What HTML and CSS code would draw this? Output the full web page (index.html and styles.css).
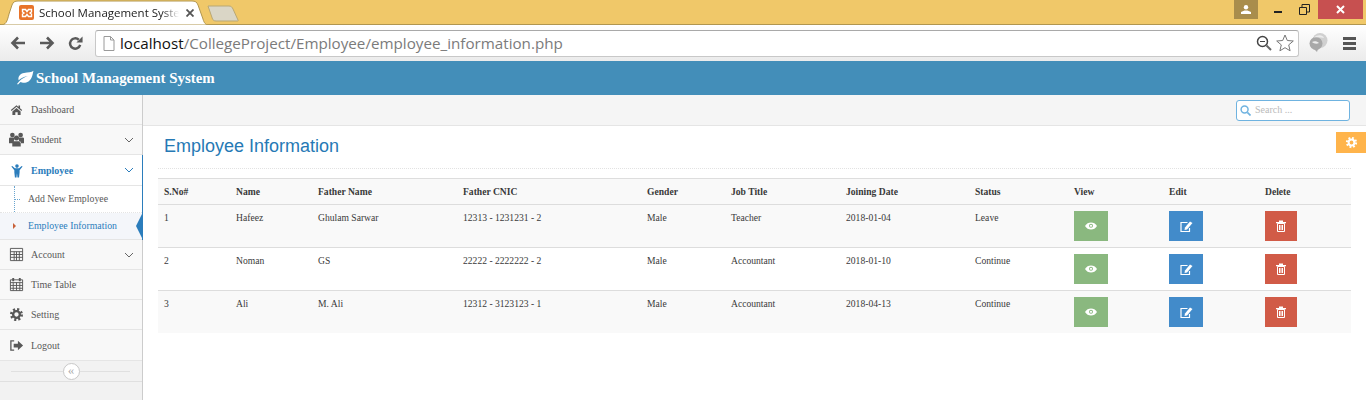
FILE: index.html
```html
<!DOCTYPE html>
<html lang="en">
<head>
    <meta charset="UTF-8">
    <title>School Management System</title>
    <link rel="stylesheet" href="styles.css">
</head>
<body>
    <svg class="icon-defs" width="0" height="0">
        <symbol id="i-home" viewBox="-1.500 -2 19 19"><path d="M8 2 0.8 8.200l1 1.100L8 4l6.200 5.300 1-1.100L12.500 6V2.500h-2v1.800zM2.800 10v4.500h3.700V11h3v3.500h3.700V10L8 5.600z"/></symbol>
        <symbol id="i-users" viewBox="0 0 16 16"><circle cx="3.600" cy="3.200" r="2.500"/><circle cx="12.400" cy="3.200" r="2.500"/><circle cx="8" cy="6.300" r="2.700"/><path d="M0 7q0-1.200 1.500-1.200h4.200L5.200 9.500 3.800 12H0zM16 7q0-1.200-1.500-1.200h-4.200l.5 3.700 1.400 2.500H16zM5 9.800h6q1.500 0 1.500 1.500V15.500h-9V11.300q0-1.500 1.500-1.500z"/></symbol>
        <symbol id="i-person" viewBox="0 0 16 16"><circle cx="8.500" cy="3.300" r="1.900"/><path d="M2.500 3.800 3.500 3.300 6.300 5.500H10.700L13.500 3.300 14.500 3.800 11.300 7.800V10.200L10.700 15.500H9L8.500 11 8 15.500H6.300L5.700 10.200V7.800z"/></symbol>
        <symbol id="i-table" viewBox="0 0 16 16"><path d="M1.500 1.500h13v13h-13zM1.500 5h13M1.500 8h13M1.500 11h13M5.500 5v9.500M8 5v9.500M11 5v9.500" fill="none" stroke="currentColor"/></symbol>
        <symbol id="i-calendar" viewBox="0 0 16 16"><path d="M1.500 3h13v11.500h-13zM1.500 6h13M1.500 9h13M1.500 12h13M4.500 6v8.500M8 6v8.500M11.500 6v8.500" fill="none" stroke="currentColor"/><path d="M3.500 1h2v3.500h-2zM10.500 1h2v3.500h-2z"/></symbol>
        <symbol id="i-cog" viewBox="-1 -1 18 18"><circle cx="8" cy="8" r="6" fill="none" stroke="currentColor" stroke-width="3.600" stroke-dasharray="2.400 2.310"/><circle cx="8" cy="8" r="4" fill="none" stroke="currentColor" stroke-width="2.800"/></symbol>
        <symbol id="i-logout" viewBox="0 0 16 16"><path d="M5.500 3H2v10h3.500" fill="none" stroke="currentColor" stroke-width="1.400"/><path d="M5 6h4.500V3L15 8l-5.500 5v-3H5z"/></symbol>
        <symbol id="i-leaf" viewBox="0 0 18 16"><path d="M17.500.8C16.700 3 16.500 9 12.500 11.500 9.500 13.300 6 12.700 4.500 12L2 14.500 1 14l2.500-3C6 8.500 9 7 12 6 8.500 6.300 5 8 2.700 10.300 1.500 6.500 4.500 3.500 8 3c4-.6 7.500-.5 9.500-2.200z"/></symbol>
        <symbol id="i-eye" viewBox="0 0 12 8"><path d="M0 4C1.500 1.500 3.500.5 6 .5s4.500 1 6 3.500C10.500 6.500 8.500 7.500 6 7.500S1.500 6.500 0 4z"/><circle cx="6" cy="3.800" r="2" fill="#8ab87f"/><circle cx="6" cy="3.800" r="1.100"/></symbol>
        <symbol id="i-edit" viewBox="0 0 13 11"><path d="M7.500 1.500H1v9h8.500V7" fill="none" stroke="currentColor" stroke-width="1.200"/><path d="M10 .5l2.500 1.500L7 8.500 4.500 9l.5-2.500z"/></symbol>
        <symbol id="i-trash" viewBox="0 0 10 12"><path d="M1.500 3.500h7v8h-7zM3.500 5v5M5 5v5M6.500 5v5" fill="none" stroke="currentColor"/><path d="M0 2h10v1.200H0zM3 .5h4V2H3z"/></symbol>
    </svg>

    <div class="chrome">
        <div class="tab-strip">
            <div class="tab">
                <svg class="tab-shape" viewBox="0 0 208 25" preserveAspectRatio="none"><path d="M0 25C6 25 7 22 9 14L12 5C13 2 15 1 18 1H192C195 1 197 2 198 5L203 19C204 23 206 25 208 25z" fill="#fff" stroke="#b1964f"/></svg>
                <span class="favicon"><svg viewBox="0 0 12 12" width="12" height="12"><path d="M1.500 2.500h3l1.500 2 1.500-2h3v2.500L9 6l1.500 1v2.500h-3L6 7.500l-1.500 2h-3V7L3 6 1.500 5z" fill="none" stroke="#fff" stroke-width="1.400"/></svg></span>
                <span class="tab-title">School Management Syste</span>
                <svg class="tab-close" viewBox="0 0 8 8" width="8" height="8"><path d="M.5.500l7 7M7.500.500l-7 7" stroke="#555" stroke-width="1.800"/></svg>
            </div>
            <svg class="new-tab" viewBox="0 0 32 17" width="32" height="17"><path d="M1 1H22C24 1 25 2 26 4L31 15C31.500 16 31 16 30 16H9C7 16 6 15 5.500 14z" fill="#dad6c6" stroke="#b9a874"/></svg>
            <div class="win-controls">
                <span class="win-user"><svg viewBox="0 0 10 9" width="10" height="9"><circle cx="5" cy="2.300" r="2.200" fill="#fff"/><path d="M0 9V7l3.500-1.500h3L10 7v2z" fill="#fff"/></svg></span>
                <span class="win-btn"><i class="win-min"></i></span>
                <span class="win-btn"><svg viewBox="0 0 11 11" width="11" height="11"><path d="M.5 3.500h7v7h-7zM3 3V.5h7.500V8H8" fill="none" stroke="#222"/></svg></span>
                <span class="win-close"><svg viewBox="0 0 9 9" width="9" height="9"><path d="M1 1l7 7M8 1L1 8" stroke="#fff" stroke-width="2"/></svg></span>
            </div>
        </div>
        <div class="toolbar">
            <svg class="tool-icon" viewBox="0 0 16 14" width="16" height="14"><path d="M15 7H3M8 1.500 2.500 7 8 12.500" fill="none" stroke="#5a5a5a" stroke-width="2.600"/></svg>
            <svg class="tool-icon" viewBox="0 0 16 14" width="16" height="14"><path d="M1 7h12M8 1.500 13.500 7 8 12.500" fill="none" stroke="#5a5a5a" stroke-width="2.600"/></svg>
            <svg class="tool-icon" viewBox="0 0 16 16" width="15" height="15"><path d="M13 9.500A5.500 5.500 0 1 1 11.500 4" fill="none" stroke="#5a5a5a" stroke-width="2.600"/><path d="M9 7h6.500V.5z" fill="#5a5a5a"/></svg>
            <div class="omnibox">
                <svg class="page-icon" viewBox="0 0 12 15" width="12" height="15"><path d="M1 .5h6.500L11 4v10.500H1zM7.500.5V4H11" fill="#fff" stroke="#9a9a9a"/></svg>
                <span class="url"><b>localhost</b>/CollegeProject/Employee/employee_information.php</span>
                <svg class="zoom-icon" viewBox="0 0 16 16" width="16" height="16"><circle cx="6.500" cy="6.500" r="5" fill="none" stroke="#444" stroke-width="1.500"/><path d="M4 6.500h5" stroke="#444"/><path d="M10.500 10.500l4.500 4.500" stroke="#666" stroke-width="2"/></svg>
                <svg viewBox="0 0 18 18" width="18" height="18"><path d="M9 1l2.300 5.500 6 .5-4.600 3.900 1.400 5.900L9 13.700l-5.100 3.100 1.400-5.900L.7 7l6-.5z" fill="#fff" stroke="#777"/></svg>
            </div>
            <svg class="globe" viewBox="0 0 20 20" width="20" height="20"><circle cx="12" cy="7.500" r="7.500" fill="#d0d0d0"/><circle cx="8" cy="10.500" r="6.500" fill="#a8a8a8"/><path d="M5 15l4 4 1-3z" fill="#a8a8a8"/><path d="M6 4.500c3-3 9-3 10 .5-3-1-7-1-10-.5zM4 9c2-1 5-1 7 1-2 1-5 1-7-1z" fill="#ececec"/></svg>
            <span class="menu-bars"><i></i><i></i><i></i></span>
        </div>
    </div>

    <div class="navbar">
        <svg class="brand-leaf" viewBox="0 0 18 16" width="18" height="16"><use href="#i-leaf"/></svg>
        <span class="brand">School Management System</span>
    </div>

    <div class="main">
        <aside class="sidebar">
            <a class="nav-item"><svg class="nav-icon"><use href="#i-home"/></svg>Dashboard</a>
            <a class="nav-item"><svg class="nav-icon"><use href="#i-users"/></svg>Student<svg class="caret" viewBox="0 0 10 6"><path d="M1 1l4 4 4-4"/></svg></a>
            <div class="nav-group">
                <a class="nav-item open"><svg class="nav-icon"><use href="#i-person"/></svg>Employee<svg class="caret" viewBox="0 0 10 6"><path d="M1 1l4 4 4-4"/></svg></a>
                <ul class="submenu">
                    <li>Add New Employee</li>
                    <li class="current">Employee Information</li>
                </ul>
            </div>
            <a class="nav-item"><svg class="nav-icon"><use href="#i-table"/></svg>Account<svg class="caret" viewBox="0 0 10 6"><path d="M1 1l4 4 4-4"/></svg></a>
            <a class="nav-item"><svg class="nav-icon"><use href="#i-calendar"/></svg>Time Table</a>
            <a class="nav-item"><svg class="nav-icon"><use href="#i-cog"/></svg>Setting</a>
            <a class="nav-item last"><svg class="nav-icon"><use href="#i-logout"/></svg>Logout</a>
            <div class="collapse-bar"><span class="collapse-btn">«</span></div>
        </aside>

        <div class="content">
            <div class="breadcrumbs">
                <div class="search">
                    <svg viewBox="0 0 12 12" width="11" height="11"><circle cx="5" cy="5" r="3.800" fill="none" stroke="#6fb3e0" stroke-width="1.600"/><path d="M8 8l3.500 3.500" stroke="#6fb3e0" stroke-width="1.800"/></svg>
                    <span class="search-text">Search ...</span>
                </div>
            </div>
            <div class="settings-btn"><svg viewBox="0 0 16 16" width="13" height="13"><use href="#i-cog"/></svg></div>
            <div class="page">
                <h1>Employee Information</h1>
                <table>
                    <colgroup>
                        <col class="c-no"><col class="c-name"><col class="c-father"><col class="c-cnic"><col class="c-gender"><col class="c-job"><col class="c-date"><col class="c-status"><col class="c-view"><col class="c-edit"><col class="c-del">
                    </colgroup>
                    <thead>
                        <tr><th>S.No#</th><th>Name</th><th>Father Name</th><th>Father CNIC</th><th>Gender</th><th>Job Title</th><th>Joining Date</th><th>Status</th><th>View</th><th>Edit</th><th>Delete</th></tr>
                    </thead>
                    <tbody>
                        <tr>
                            <td>1</td><td>Hafeez</td><td>Ghulam Sarwar</td><td>12313 - 1231231 - 2</td><td>Male</td><td>Teacher</td><td>2018-01-04</td><td>Leave</td>
                            <td><a class="btn btn-view"><svg width="12" height="8"><use href="#i-eye"/></svg></a></td>
                            <td><a class="btn btn-edit"><svg width="13" height="11"><use href="#i-edit"/></svg></a></td>
                            <td><a class="btn btn-del"><svg width="10" height="12"><use href="#i-trash"/></svg></a></td>
                        </tr>
                        <tr>
                            <td>2</td><td>Noman</td><td>GS</td><td>22222 - 2222222 - 2</td><td>Male</td><td>Accountant</td><td>2018-01-10</td><td>Continue</td>
                            <td><a class="btn btn-view"><svg width="12" height="8"><use href="#i-eye"/></svg></a></td>
                            <td><a class="btn btn-edit"><svg width="13" height="11"><use href="#i-edit"/></svg></a></td>
                            <td><a class="btn btn-del"><svg width="10" height="12"><use href="#i-trash"/></svg></a></td>
                        </tr>
                        <tr>
                            <td>3</td><td>Ali</td><td>M. Ali</td><td>12312 - 3123123 - 1</td><td>Male</td><td>Accountant</td><td>2018-04-13</td><td>Continue</td>
                            <td><a class="btn btn-view"><svg width="12" height="8"><use href="#i-eye"/></svg></a></td>
                            <td><a class="btn btn-edit"><svg width="13" height="11"><use href="#i-edit"/></svg></a></td>
                            <td><a class="btn btn-del"><svg width="10" height="12"><use href="#i-trash"/></svg></a></td>
                        </tr>
                    </tbody>
                </table>
            </div>
        </div>
    </div>
</body>
</html>
```

FILE: styles.css
```css
html, body {
    height: 400px;
    overflow: hidden;
}

body {
    margin: 0;
    background: #fff;
    font-family: "Liberation Serif", serif;
    font-size: 10px;
    color: #393939;
    display: flex;
    flex-direction: column;
}

.icon-defs {
    position: absolute;
}

/* browser window */
.chrome {
    height: 61px;
    flex: none;
}

.tab-strip {
    height: 24px;
    background: #f0c869;
    border-bottom: 1px solid #b1964f;
    box-sizing: content-box;
    display: flex;
    align-items: flex-start;
    position: relative;
}

.tab {
    width: 208px;
    height: 25px;
    position: relative;
    display: flex;
    align-items: center;
    flex: none;
    font-family: "Open Sans", sans-serif;
    font-size: 11.500px;
    color: #222;
    box-sizing: border-box;
    padding: 0 0 0 19px;
}

.tab-shape {
    position: absolute;
    left: 0;
    top: 0;
    width: 208px;
    height: 25px;
}

.favicon {
    position: relative;
    width: 15px;
    height: 15px;
    background: #e8732a;
    border-radius: 2px;
    display: flex;
    align-items: center;
    justify-content: center;
    flex: none;
}

.tab-title {
    position: relative;
    margin-left: 5px;
    width: 140px;
    white-space: nowrap;
    -webkit-mask-image: linear-gradient(to right, #000 88%, transparent);
    mask-image: linear-gradient(to right, #000 88%, transparent);
}

.tab-close {
    position: relative;
    margin-left: 7px;
    flex: none;
}

.new-tab {
    margin: 5px 0 0 -1px;
    flex: none;
}

.win-controls {
    margin-left: auto;
    margin-right: 3px;
    display: flex;
    height: 19px;
}

.win-user {
    width: 24px;
    background: #a98d4c;
    display: flex;
    align-items: center;
    justify-content: center;
    margin-right: 7px;
}

.win-btn {
    width: 26px;
    display: flex;
    align-items: center;
    justify-content: center;
}

.win-min {
    width: 8px;
    height: 2px;
    margin-top: 5px;
    background: #222;
}

.win-close {
    width: 45px;
    margin-left: 1px;
    background: #c75050;
    display: flex;
    align-items: center;
    justify-content: center;
}

.toolbar {
    height: 36px;
    background: linear-gradient(#fff, #ebebeb);
    border-bottom: 1px solid #a8a8a8;
    display: flex;
    align-items: center;
    padding-left: 10px;
}

.tool-icon {
    margin-right: 13px;
    flex: none;
}

.omnibox {
    width: 1204px;
    height: 27px;
    margin-left: -1px;
    box-sizing: border-box;
    background: #fff;
    border: 1px solid #c8c8c8;
    border-top-color: #a9a9a9;
    border-radius: 3px;
    display: flex;
    align-items: center;
    padding: 0 4px 0 7px;
    flex: none;
}

.url {
    margin-left: 5px;
    font-family: "Open Sans", sans-serif;
    font-size: 15.200px;
    color: #7b7b7b;
    white-space: nowrap;
}

.url b {
    font-weight: normal;
    color: #111;
}

.zoom-icon {
    margin-left: auto;
    margin-right: 4px;
}

.globe {
    margin-left: 9px;
    flex: none;
}

.menu-bars {
    margin-left: 15px;
    display: flex;
    flex-direction: column;
    gap: 2px;
}

.menu-bars i {
    width: 13px;
    height: 3px;
    background: #555;
}

/* app */
.navbar {
    height: 34px;
    flex: none;
    background: #438eb9;
    display: flex;
    align-items: center;
    padding-left: 16px;
    color: #fff;
}

.brand-leaf {
    fill: #fff;
    margin-right: 2px;
}

.brand {
    font-size: 14.900px;
    font-weight: bold;
}

.main {
    flex: 1;
    display: flex;
    min-height: 0;
}

.sidebar {
    width: 143px;
    flex: none;
    box-sizing: border-box;
    background: #f2f2f2;
    border-right: 1px solid #ccc;
}

.nav-item {
    height: 30px;
    box-sizing: border-box;
    background: #f8f8f8;
    border-bottom: 1px solid #e5e5e5;
    display: flex;
    align-items: center;
    padding-left: 9px;
    color: #585858;
    position: relative;
}

.nav-item.last {
    height: 31px;
}

.nav-icon {
    width: 15px;
    height: 15px;
    margin-right: 7px;
    fill: #585858;
    color: #585858;
    flex: none;
}

.caret {
    width: 10px;
    height: 6px;
    margin-left: auto;
    margin-right: 8px;
    fill: none;
    stroke: #666;
}

.nav-group {
    margin-right: -1px;
    border-right: 1px solid #2b7dbc;
    position: relative;
}

.nav-item.open {
    background: #fff;
    color: #2b7dbc;
    font-weight: bold;
    height: 31px;
}

.nav-item.open .nav-icon {
    fill: #2b7dbc;
}

.nav-item.open .caret {
    stroke: #2b7dbc;
}

.submenu {
    list-style: none;
    margin: 0;
    padding: 0;
    position: relative;
    background: #fff;
}

.submenu::before {
    content: "";
    position: absolute;
    left: 14px;
    top: 0;
    bottom: 0;
    border-left: 1px dotted #6aa5cf;
}

.submenu li {
    height: 27px;
    box-sizing: border-box;
    line-height: 25px;
    padding-left: 28px;
    font-size: 9.800px;
    color: #585858;
    position: relative;
    white-space: nowrap;
}

.submenu li:first-child {
    border-bottom: 1px dotted #e4e4e4;
}

.submenu li:first-child::before {
    content: "";
    position: absolute;
    left: 15px;
    top: 13px;
    width: 5px;
    border-top: 1px dotted #6aa5cf;
}

.submenu li.current {
    background: #f4f6fa;
    color: #2b7dbc;
    border-bottom: 1px solid #e5e5e5;
}

/* small marker in front of the current page */
.submenu li.current::before {
    content: "";
    position: absolute;
    left: 13px;
    top: 10px;
    border: 3px solid transparent;
    border-left: 3px solid #c86139;
    border-right: 0;
}

/* blue arrow pointing at the content */
.submenu li.current::after {
    content: "";
    position: absolute;
    right: 0;
    top: 1px;
    border: 12px solid transparent;
    border-right: 6px solid #2b7dbc;
    border-left: 0;
}

.collapse-bar {
    height: 20px;
    box-sizing: content-box;
    border-bottom: 1px solid #e0e0e0;
    background: linear-gradient(#e0e0e0, #e0e0e0) no-repeat 11px 10px / 119px 1px;
    display: flex;
    justify-content: center;
    align-items: center;
}

.collapse-btn {
    width: 15px;
    height: 15px;
    border: 1px solid #c8c8c8;
    border-radius: 50%;
    background: #fff;
    color: #aaa;
    font-size: 13px;
    line-height: 12px;
    text-align: center;
}

.content {
    flex: 1;
    min-width: 0;
    position: relative;
}

.breadcrumbs {
    height: 31px;
    box-sizing: border-box;
    background: #f5f5f5;
    border-bottom: 1px solid #e5e5e5;
    display: flex;
    align-items: center;
    justify-content: flex-end;
    padding-right: 16px;
}

.search {
    width: 114px;
    height: 21px;
    box-sizing: border-box;
    background: #fff;
    border: 1px solid #6fb3e0;
    border-radius: 3px;
    display: flex;
    align-items: center;
    gap: 4px;
    padding-left: 3px;
    color: #bbb;
}

.search-text {
    margin-top: -2px;
}

.settings-btn {
    position: absolute;
    right: 0;
    top: 37px;
    width: 30px;
    height: 21px;
    background: #ffb44b;
    color: #fff;
    fill: #fff;
    display: flex;
    align-items: center;
    justify-content: center;
}

.page {
    padding: 0 15px;
}

.page h1 {
    margin: 0;
    height: 43px;
    padding: 9px 0 0 6px;
    box-sizing: border-box;
    border-bottom: 1px dotted #e2e2e2;
    font-family: "Liberation Sans", sans-serif;
    font-size: 18px;
    font-weight: normal;
    line-height: 22px;
    color: #2679b5;
}

table {
    width: 1193px;
    margin-top: 9px;
    border-collapse: collapse;
    table-layout: fixed;
    font-size: 9.600px;
}

.c-no { width: 72px; }
.c-name { width: 82px; }
.c-father { width: 145px; }
.c-cnic { width: 184px; }
.c-gender { width: 84px; }
.c-job { width: 115px; }
.c-date { width: 129px; }
.c-status { width: 99px; }
.c-view { width: 95px; }
.c-edit { width: 96px; }

th {
    height: 25px;
    padding: 0 6px;
    text-align: left;
    font-weight: bold;
    background: #f9f9f9;
    border-top: 1px solid #ddd;
    border-bottom: 1px solid #ddd;
}

td {
    height: 43px;
    box-sizing: border-box;
    padding: 6px;
    line-height: 13px;
    vertical-align: top;
    border-top: 1px solid #ddd;
}

tbody tr:first-child td {
    border-top: 0;
}

tbody tr:last-child td {
    height: 42px;
    padding-bottom: 5px;
}

tbody tr:nth-child(odd) {
    background: #f9f9f9;
}

.btn {
    width: 34px;
    height: 30px;
    display: flex;
    align-items: center;
    justify-content: center;
    color: #fff;
    fill: #fff;
}

.btn-view { background: #8ab87f; }
.btn-edit { background: #428bca; }
.btn-del { background: #d15b47; width: 32px; }
```
